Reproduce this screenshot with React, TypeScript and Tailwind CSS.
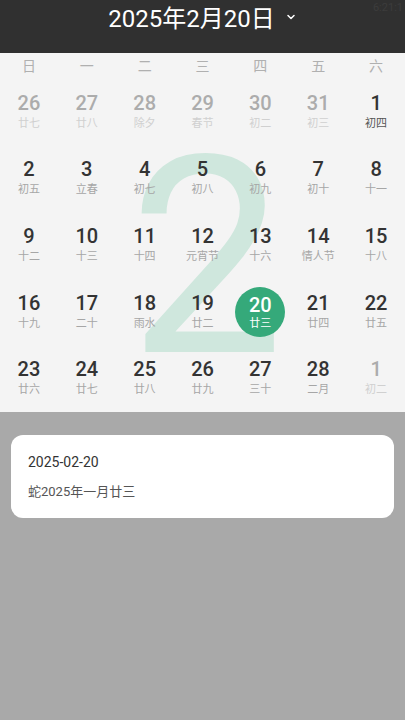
import { ChevronDown } from "lucide-react";

type Day = { d: number; l: string; faded?: boolean; sel?: boolean };

const weekdays = ["日", "一", "二", "三", "四", "五", "六"];

const days: Day[] = [
  { d: 26, l: "廿七", faded: true },
  { d: 27, l: "廿八", faded: true },
  { d: 28, l: "除夕", faded: true },
  { d: 29, l: "春节", faded: true },
  { d: 30, l: "初二", faded: true },
  { d: 31, l: "初三", faded: true },
  { d: 1, l: "初四" },
  { d: 2, l: "初五" },
  { d: 3, l: "立春" },
  { d: 4, l: "初七" },
  { d: 5, l: "初八" },
  { d: 6, l: "初九" },
  { d: 7, l: "初十" },
  { d: 8, l: "十一" },
  { d: 9, l: "十二" },
  { d: 10, l: "十三" },
  { d: 11, l: "十四" },
  { d: 12, l: "元宵节" },
  { d: 13, l: "十六" },
  { d: 14, l: "情人节" },
  { d: 15, l: "十八" },
  { d: 16, l: "十九" },
  { d: 17, l: "二十" },
  { d: 18, l: "雨水" },
  { d: 19, l: "廿二" },
  { d: 20, l: "廿三", sel: true },
  { d: 21, l: "廿四" },
  { d: 22, l: "廿五" },
  { d: 23, l: "廿六" },
  { d: 24, l: "廿七" },
  { d: 25, l: "廿八" },
  { d: 26, l: "廿九" },
  { d: 27, l: "三十" },
  { d: 28, l: "二月" },
  { d: 1, l: "初二", faded: true },
];

const font = { fontFamily: 'Roboto, "Noto Sans CJK SC", sans-serif' };

function DayCell({ day }: { day: Day }) {
  if (day.sel) {
    return (
      <div className="flex items-center justify-center">
        <div className="flex h-[50px] w-[50px] flex-col items-center justify-center rounded-full bg-[#35a97a] text-white">
          <span className="text-[20px] font-medium leading-[22px]">{day.d}</span>
          <span className="text-[11px] leading-[15px]">{day.l}</span>
        </div>
      </div>
    );
  }
  return (
    <div className="flex flex-col items-center justify-center pb-[2px]">
      <span
        className={`text-[20px] font-medium leading-[22px] ${day.faded ? "text-[#acacac]" : "text-[#333333]"}`}
      >
        {day.d}
      </span>
      <span
        className={`mt-[2px] text-[11px] leading-[15px] ${day.faded ? "text-[#d0d0d0]" : day.d === 1 ? "text-[#555]" : "text-[#a6a6a6]"}`}
      >
        {day.l}
      </span>
    </div>
  );
}

export default function App() {
  return (
    <div className="flex h-[720px] w-[405px] flex-col bg-[#a9a9a9]" style={font}>
      <header className="relative flex h-[53px] shrink-0 items-start justify-center bg-[#303030] pt-[3px]">
        <span className="text-[24px] leading-[32px] text-white">2025年2月20日</span>
        <ChevronDown className="ml-[10px] mt-[8px] h-[12px] w-[12px] text-white" strokeWidth={3} />
        <span className="absolute right-[2px] top-0 text-[11px] text-[#3c3c3c]">6:21:1</span>
      </header>

      <section className="relative h-[359px] shrink-0 overflow-hidden bg-[#f4f4f4]">
        <div
          aria-hidden="true"
          className="pointer-events-none absolute left-0 top-[55px] w-full select-none text-center text-[276px] leading-[300px] text-[#cfe7dd]"
        >
          <span className="ml-[8px]">2</span>
        </div>
        <div className="relative grid h-[26px] grid-cols-7 items-center">
          {weekdays.map((w) => (
            <span key={w} className="text-center text-[14px] text-[#b0b0b0]">
              {w}
            </span>
          ))}
        </div>
        <div className="relative grid h-[333px] grid-cols-7 grid-rows-5">
          {days.map((day, i) => (
            <DayCell key={i} day={day} />
          ))}
        </div>
      </section>

      <div className="mx-[11px] mt-[23px] flex h-[83px] flex-col justify-center gap-[10px] rounded-[12px] bg-white px-[17px]">
        <span className="text-[14px] leading-[20px] text-[#333]">2025-02-20</span>
        <span className="text-[13px] leading-[20px] text-[#555]">蛇2025年一月廿三</span>
      </div>
    </div>
  );
}
